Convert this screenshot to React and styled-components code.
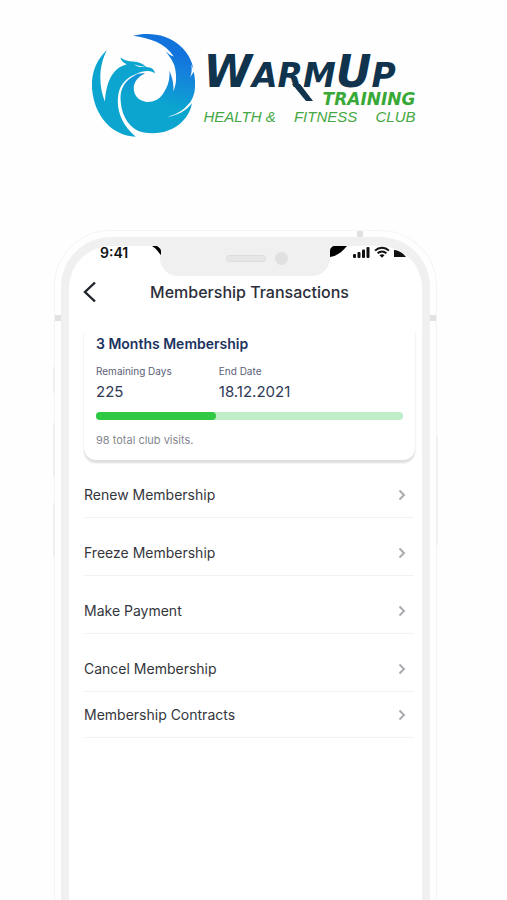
import React from 'react'
import styled, { createGlobalStyle } from 'styled-components'

const GlobalStyle = createGlobalStyle`
*{
  box-sizing:border-box;
  margin:0;
  padding:0;
}
body{
  background:#fefefe;
  font-family:Inter, "Liberation Sans", sans-serif;
}
`;

const links = [
  { label: 'Renew Membership' },
  { label: 'Freeze Membership' },
  { label: 'Make Payment' },
  { label: 'Cancel Membership' },
  { label: 'Membership Contracts', compact: true },
]

const Bird = () => (
  <BirdSvg viewBox="34 20 320 320" aria-hidden="true">
    <defs>
      <linearGradient id="wing" gradientUnits="userSpaceOnUse" x1="310" y1="90" x2="265" y2="245">
        <stop offset="0" stopColor="#1273dc" />
        <stop offset="0.4" stopColor="#1585dc" />
        <stop offset="1" stopColor="#0ba5cf" />
      </linearGradient>
    </defs>
    <path fill="#0ba5cf" d="M79 74C47 103 31 146 34 190C40 272 93 334 166 336C128 304 110 264 112 222C114 187 130 163 160 150C174 143 188 138 203 138C213 138 219 141 224 145C223 133 213 127 198 126C190 116 176 110 157 109C144 108 130 105 120 96C121 106 129 113 139 117C105 126 78 155 73 230C56 190 51 128 79 74Z" />
    <path fill="#fff" d="M160 117C174 122 183 124 195 124C185 128 173 126 160 117Z" />
    <path fill="url(#wing)" d="M163 151C138 164 121 185 120 217C120 260 137 301 174 319C218 334 274 324 306 291C322 275 332 257 336 234C319 257 294 271 262 276C290 264 312 249 325 230L300 190L280 198C281 176 276 157 268 137C269 166 263 185 248 207C237 224 219 232 199 231C177 229 160 213 160 190C160 170 174 153 194 145C181 144 171 146 163 151Z" />
    <path fill="url(#wing)" d="M158 31C201 20 263 24 304 65C324 84 336 108 341 134L334 118C336 132 335 146 330 157L341 140C346 160 346 180 344 198C340 216 334 230 325 238C308 258 289 268 262 276L255 215L280 198C290 175 290 150 283 122C278 106 268 94 256 77C263 85 272 91 281 94C255 54 211 38 158 31Z" />
  </BirdSvg>
)

const Signal = () => (
  <svg width="17" height="12" viewBox="0 0 17 12" fill="#111" aria-hidden="true">
    <rect x="0" y="8" width="3" height="4" rx="1" />
    <rect x="4.5" y="6" width="3" height="6" rx="1" />
    <rect x="9" y="3.5" width="3" height="8.5" rx="1" />
    <rect x="13.5" y="1" width="3" height="11" rx="1" />
  </svg>
)

const Wifi = () => (
  <svg width="16" height="12" viewBox="0 0 16 12" fill="none" stroke="#111" strokeWidth="2" aria-hidden="true">
    <path d="M1 4.6C5 .8 11 .8 15 4.6" />
    <path d="M3.6 7.3C6.2 5 9.8 5 12.4 7.3" />
    <path d="M5.5 9.2C7 8 9 8 10.5 9.2L8 11.8Z" fill="#111" stroke="none" />
  </svg>
)

const Battery = () => (
  <svg width="12" height="12" viewBox="0 0 12 12" aria-hidden="true">
    <path d="M0 4C4 4 9 7 12 11H0Z" fill="#111" />
  </svg>
)

const App = () => {
  return (
    <Page>
      <GlobalStyle />
      <Logo>
        <Bird />
        <Brand>
          <Name>W<small>ARM</small>U<small>P</small>
            <Tail viewBox="0 0 22 20" aria-hidden="true"><path d="M0 0H8L21 17H14Z" fill="#10344d" /></Tail>
          </Name>
          <Training>TRAINING</Training>
          <Slogan><span>HEALTH &amp;</span> <span>FITNESS</span> <span>CLUB</span></Slogan>
        </Brand>
      </Logo>

      <Phone>
        <Antenna $place="top" />
        <Antenna $place="left" />
        <Antenna $place="right" />
        <SideKey $side="left" $top={136} $size={26} />
        <SideKey $side="left" $top={192} $size={54} />
        <SideKey $side="left" $top={272} $size={54} />
        <SideKey $side="right" $top={206} $size={108} />
        <Frame>
          <Screen>
            <Notch>
              <NotchCorner $side="left" width="9" height="9" viewBox="0 0 9 9" aria-hidden="true">
                <path d="M0 0H5C7 1 9 3 9 5V9C6 6 5 3 0 0Z" />
              </NotchCorner>
              <Speaker />
              <Camera />
              <NotchCorner $side="right" width="17" height="11" viewBox="0 0 17 11" aria-hidden="true">
                <path d="M0 5C0 2 2 0 5 0H17C12 6 7 10 0 11Z" />
              </NotchCorner>
            </Notch>
            <Status>
              <Time>9:41</Time>
              <Icons><Signal /><Wifi /><Battery /></Icons>
            </Status>
            <Header>
              <Back type="button" aria-label="Back">
                <svg width="14" height="22" viewBox="0 0 14 22" fill="none" stroke="#20232b" strokeWidth="2.4" aria-hidden="true">
                  <path d="M12 1.5L2 11L12 20.5" />
                </svg>
              </Back>
              <h1>Membership Transactions</h1>
            </Header>
            <Card>
              <h2>3 Months Membership</h2>
              <Stats>
                <div>
                  <dt>Remaining Days</dt>
                  <dd>225</dd>
                </div>
                <div>
                  <dt>End Date</dt>
                  <dd>18.12.2021</dd>
                </div>
              </Stats>
              <Bar role="progressbar" aria-label="Membership used" aria-valuenow={39}>
                <Fill style={{ width: '39%' }} />
              </Bar>
              <p>98 total club visits.</p>
            </Card>
            <Menu>
              {links.map((link) => (
                <Row key={link.label} href="#" $compact={link.compact}>
                  {link.label}
                  <svg width="8" height="12" viewBox="0 0 8 12" fill="none" stroke="#a9abaf" strokeWidth="2" aria-hidden="true">
                    <path d="M1.5 1.5L6 6L1.5 10.5" />
                  </svg>
                </Row>
              ))}
            </Menu>
          </Screen>
        </Frame>
      </Phone>
    </Page>
  )
}

const Page = styled.main`
  min-height:100vh;
  display:flex;
  flex-direction:column;
  overflow:hidden;
`;

const Logo = styled.div`
  display:flex;
  justify-content:center;
  gap:6px;
  padding:32px 0 92px;
`;

const BirdSvg = styled.svg`
  width:106px;
  height:106px;
`;

const Brand = styled.div`
  width:212px;
  padding-top:24px;
  display:flex;
  flex-direction:column;
  font-family:"DejaVu Sans", sans-serif;
  font-style:italic;
`;

const Name = styled.strong`
  position:relative;
  font-size:44px;
  line-height:32px;
  color:#10344d;
  white-space:nowrap;
  small{
    font-size:33px;
    line-height:1px;
  }
`;

const Tail = styled.svg`
  position:absolute;
  left:88px;
  top:28px;
  width:22px;
  height:20px;
`;

const Training = styled.strong`
  align-self:flex-end;
  font-size:17px;
  line-height:22px;
  color:#38a936;
`;

const Slogan = styled.div`
  display:flex;
  justify-content:space-between;
  font-family:"Liberation Sans", sans-serif;
  font-size:15px;
  line-height:14px;
  color:#46a844;
`;

const Phone = styled.section`
  position:relative;
  flex:1;
  display:flex;
  margin:0 70px 0 54px;
  padding:6px 6px 0;
  border:1px solid #f4f4f4;
  border-bottom:0;
  border-radius:56px 56px 0 0;
`;

const Antenna = styled.i`
  position:absolute;
  width:6px;
  height:6px;
  background:#e2e2e2;
  ${({ $place }) => $place === 'top' ? 'top:0; right:73px;' : `top:84px; ${$place}:0;`}
`;

const SideKey = styled.i`
  position:absolute;
  ${({ $side }) => $side}:-2px;
  top:${({ $top }) => $top}px;
  width:2px;
  height:${({ $size }) => $size}px;
  background:#f0f0f0;
`;

const Frame = styled.div`
  flex:1;
  display:flex;
  padding:9px 8px 0;
  background:#f0f0f0;
  border-radius:50px 50px 0 0;
`;

const Screen = styled.div`
  position:relative;
  flex:1;
  background:#fff;
  border-radius:42px 42px 0 0;
`;

const Notch = styled.div`
  position:absolute;
  top:0;
  left:50%;
  width:170px;
  height:30px;
  margin-left:-86px;
  background:#f0f0f0;
  border-radius:0 0 18px 18px;
`;

const NotchCorner = styled.svg`
  position:absolute;
  top:0;
  ${({ $side }) => $side === 'left' ? 'left:-8px' : 'left:170px'};
  fill:#000;
`;

const Speaker = styled.i`
  position:absolute;
  left:66px;
  top:9px;
  width:40px;
  height:7px;
  border:1px solid #dcdcdc;
  border-radius:4px;
  background:#e6e6e6;
`;

const Camera = styled.i`
  position:absolute;
  left:115px;
  top:6px;
  width:13px;
  height:13px;
  border-radius:50%;
  background:#e0e0e0;
`;

const Status = styled.div`
  display:flex;
  justify-content:space-between;
  height:24px;
  padding:0 16px 0 31px;
`;

const Time = styled.time`
  font-size:14px;
  line-height:14px;
  font-weight:600;
  color:#111;
`;

const Icons = styled.div`
  display:flex;
  gap:4px;
`;

const Header = styled.header`
  position:relative;
  height:44px;
  display:flex;
  align-items:center;
  padding:0 14px;
  h1{
    flex:1;
    margin-right:6px;
    text-align:center;
    font-size:16px;
    line-height:20px;
    font-weight:500;
    color:#2b2e3a;
  }
`;

const Back = styled.button`
  display:flex;
  border:0;
  background:none;
`;

const Card = styled.section`
  margin:16px 7px 0 15px;
  padding:4px 12px 12px;
  border-radius:0 0 12px 12px;
  box-shadow:0 3px 2px #dedede, 0 0 1px #e6e6e6;
  clip-path:inset(0 -4px -8px -4px);
  h2{
    font-size:14px;
    line-height:20px;
    font-weight:600;
    color:#1c3360;
  }
  p{
    font-size:11px;
    line-height:16px;
    color:#85878f;
  }
`;

const Stats = styled.dl`
  display:grid;
  grid-template-columns:2fr 3fr;
  padding:8px 0;
  dt{
    font-size:10px;
    line-height:18px;
    color:#5a6178;
  }
  dd{
    font-size:15px;
    line-height:24px;
    color:#2f3a55;
  }
`;

const Bar = styled.div`
  height:8px;
  margin-bottom:12px;
  border-radius:4px;
  background:#bfeec8;
`;

const Fill = styled.div`
  height:8px;
  border-radius:4px;
  background:#30c943;
`;

const Menu = styled.nav`
  margin:0 8px 0 15px;
`;

const Row = styled.a`
  display:flex;
  justify-content:space-between;
  align-items:flex-end;
  height:${({ $compact }) => $compact ? 46 : 58}px;
  padding:0 8px 12px 0;
  border-bottom:1px solid #f2f2f2;
  font-size:14px;
  line-height:20px;
  color:#34363b;
  text-decoration:none;
  svg{
    margin-bottom:4px;
  }
`;

export default App
